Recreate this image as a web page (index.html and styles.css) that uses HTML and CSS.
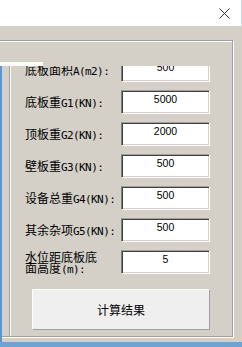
FILE: index.html
```html
<!DOCTYPE html>
<html lang="zh">
<head>
<meta charset="utf-8">
<title>计算</title>
<link rel="stylesheet" href="styles.css">
</head>
<body>
<div class="title">
  <svg class="close" width="11" height="11" viewBox="0 0 11 11"><path d="M0.5 0.5L10.5 10.5M10.5 0.5L0.5 10.5" stroke="#333" stroke-width="1" fill="none"/></svg>
</div>
<div class="client">
  <div class="group">
    <div class="strip"></div>
    <div class="pane">
      <div class="rows">
        <div class="row"><div class="label">底板面积<span class="lat">A(m2):</span></div><div class="field">500</div></div>
        <div class="row"><div class="label">底板重<span class="lat">G1(KN):</span></div><div class="field">5000</div></div>
        <div class="row"><div class="label">顶板重<span class="lat">G2(KN):</span></div><div class="field">2000</div></div>
        <div class="row"><div class="label">壁板重<span class="lat">G3(KN):</span></div><div class="field">500</div></div>
        <div class="row"><div class="label">设备总重<span class="lat">G4(KN):</span></div><div class="field">500</div></div>
        <div class="row"><div class="label">其余杂项<span class="lat">G5(KN):</span></div><div class="field">500</div></div>
        <div class="row"><div class="label two">水位距底板底<br>面高度<span class="lat">(m):</span></div><div class="field">5</div></div>
        <button class="calc">计算结果</button>
      </div>
    </div>
  </div>
</div>
<div class="frame-left"></div>
<div class="frame-bottom"></div>
</body>
</html>
```
FILE: styles.css
```css
html, body {
  margin: 0;
  padding: 0;
}
body {
  position: relative;
  width: 242px;
  height: 347px;
  overflow: hidden;
  background: #d4d0c8;
  font-family: "Noto Sans CJK SC", "Liberation Sans", sans-serif;
  font-size: 12px;
  color: #000;
}
.title {
  height: 26px;
  background: #fff;
  display: flex;
  justify-content: flex-end;
  align-items: center;
  padding-right: 11px;
  box-sizing: border-box;
  border-right: 1px solid #c4d7ea;
}
.close {
  display: block;
}
.client {
  padding-top: 14px;
}
.group {
  box-sizing: border-box;
  width: 233px;
  height: 297px;
  border: 1px solid #a0a0a0;
  border-left: none;
  box-shadow: inset 0 1px 0 #fff, 1px 1px 0 #fff;
  display: flex;
  flex-direction: column;
}
.strip {
  margin-top: 21px;
  width: 43px;
  height: 4px;
  background: #fbfbfb;
}
.pane {
  flex: 1;
  margin-left: 9px;
  border-left: 1px solid #a0a0a0;
  box-shadow: inset 1px 0 0 #fff;
  overflow: hidden;
}
.rows {
  margin-top: -8px;
  display: flex;
  flex-direction: column;
}
.row {
  display: flex;
  align-items: center;
  height: 24px;
  margin-bottom: 8px;
}
.label {
  width: 96px;
  padding-left: 15px;
  padding-top: 2px;
  line-height: 14px;
  white-space: nowrap;
  flex-shrink: 0;
}
.label.two {
  line-height: 11.5px;
  padding-top: 2px;
}
.lat {
  font-family: "DejaVu Sans Mono", "Liberation Mono", monospace;
  font-size: 11px;
  letter-spacing: -0.6px;
}
.field {
  box-sizing: border-box;
  width: 89px;
  height: 24px;
  background: #fff;
  border-top: 1px solid #a0a0a0;
  border-left: 1px solid #808080;
  border-bottom: 1px solid #fff;
  border-right: 1px solid #fff;
  box-shadow: inset 1px 1px 0 #404040, inset -1px -1px 0 #d4d0c8;
  font-family: "Liberation Sans", Arial, sans-serif;
  font-size: 10.5px;
  line-height: 12px;
  padding-top: 2px;
  text-align: center;
}
.calc {
  margin: 7px 0 0 22px;
  width: 178px;
  height: 41px;
  padding: 0;
  background: #efefef;
  border-top: 1px solid #fff;
  border-left: 1px solid #fff;
  border-right: 1px solid #a0a0a0;
  border-bottom: 1px solid #a0a0a0;
  font-family: "Noto Sans CJK SC", sans-serif;
  font-size: 12px;
  color: #000;
}
.frame-left {
  position: absolute;
  left: 0;
  top: 66px;
  bottom: 0;
  width: 2px;
  background: #5b95c9;
}
.frame-bottom {
  position: absolute;
  left: 0;
  right: 0;
  bottom: 0;
  height: 5px;
  background: #6fa3d3;
}
```
